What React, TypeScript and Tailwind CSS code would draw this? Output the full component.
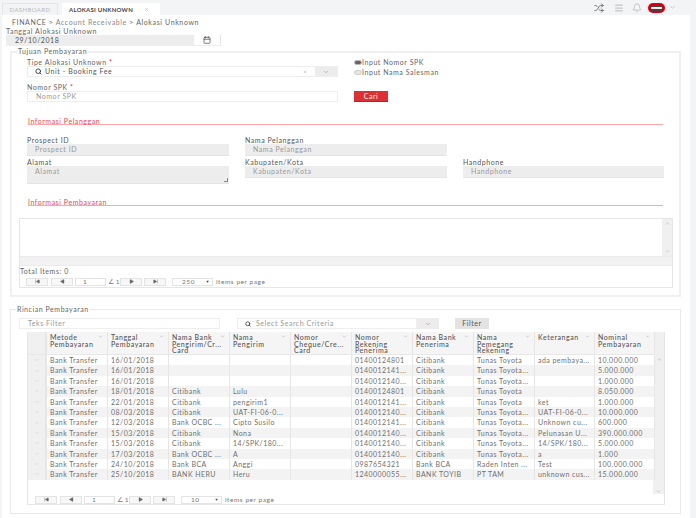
import { Bell, Calendar, ChevronDown, ChevronUp, Menu, Search, Shuffle, X, SkipBack, SkipForward, Play } from "lucide-react";

const cols = ["w-[61px]", "w-[61px]", "w-[61px]", "w-[61px]", "w-[61px]", "w-[61px]", "w-[61px]", "w-[61px]", "w-[60px]", "w-[60px]"];
const heads = ["Metode Pembayaran", "Tanggal Pembayaran", "Nama Bank Pengirim/Cr... Card", "Nama Pengirim", "Nomor Cheque/Cre... Card", "Nomor Rekening Penerima", "Nama Bank Penerima", "Nama Pemegang Rekening", "Keterangan", "Nominal Pembayaran"];
const rows: string[][] = [
  ["Bank Transfer", "16/01/2018", "", "", "", "01400124801", "Citibank", "Tunas Toyota", "ada pembaya...", "10.000.000"],
  ["Bank Transfer", "16/01/2018", "", "", "", "0140012141...", "Citibank", "Tunas Toyota...", "", "5.000.000"],
  ["Bank Transfer", "16/01/2018", "", "", "", "0140012140...", "Citibank", "Tunas Toyota...", "", "1.000.000"],
  ["Bank Transfer", "18/01/2018", "Citibank", "Lulu", "", "01400124801", "Citibank", "Tunas Toyota", "", "8.050.000"],
  ["Bank Transfer", "22/01/2018", "Citibank", "pengirim1", "", "0140012141...", "Citibank", "Tunas Toyota", "ket", "1.000.000"],
  ["Bank Transfer", "08/03/2018", "Citibank", "UAT-FI-06-0...", "", "0140012140...", "Citibank", "Tunas Toyota...", "UAT-FI-06-0...", "10.000.000"],
  ["Bank Transfer", "12/03/2018", "Bank OCBC ...", "Cipto Susilo", "", "0140012141...", "Citibank", "Tunas Toyota...", "Unknown cu...", "600.000"],
  ["Bank Transfer", "15/03/2018", "Citibank", "Nona", "", "0140012140...", "Citibank", "Tunas Toyota...", "Pelunasan U...", "390.000.000"],
  ["Bank Transfer", "15/03/2018", "Citibank", "14/SPK/180...", "", "0140012140...", "Citibank", "Tunas Toyota...", "14/SPK/180...", "5.000.000"],
  ["Bank Transfer", "17/03/2018", "Bank OCBC ...", "A", "", "0140012140...", "Citibank", "Tunas Toyota...", "a", "1.000"],
  ["Bank Transfer", "24/10/2018", "Bank BCA", "Anggi", "", "0987654321", "Bank BCA", "Raden Inten ...", "Test", "100.000.000"],
  ["Bank Transfer", "25/10/2018", "BANK HERU", "Heru", "", "1240000055...", "BANK TOYIB", "PT TAM", "unknown cus...", "15.000.000"],
];

function Pager({ page, size, next }: { page: string; size: string; next?: boolean }) {
  const btn = "h-[8px] w-[22px] shrink-0 border border-[#e4e4e4] bg-[#f7f7f7] flex items-center justify-center text-[#666]";
  return (
    <div className="flex items-center h-[9px] text-[6.5px] text-[#777] whitespace-nowrap">
      <div className={btn}><SkipBack size={5} fill="currentColor" /></div>
      <div className={`${btn} ml-[3px]`}><Play size={5} fill="currentColor" className="rotate-180" /></div>
      <div className="h-[8px] w-[31px] ml-[2px] border border-[#e4e4e4] bg-white pl-[7px] leading-[6px]">{page}</div>
      <span className="ml-[2px] w-[12px] shrink-0 overflow-hidden tracking-normal">∠ 1</span>
      <div className={`${btn} ${next ? "border-[#bbb] bg-[#eee]" : ""}`}><Play size={5} fill="currentColor" /></div>
      <div className={`${btn} ml-[2px]`}><SkipForward size={5} fill="currentColor" /></div>
      <div className="h-[8px] w-[41px] ml-[6px] border border-[#e4e4e4] bg-white pl-[9px] leading-[6px] flex items-center justify-between pr-[2px]">
        <span>{size}</span><span className="text-[4px] text-[#444]">▼</span>
      </div>
      <span className="ml-[3px]">items per page</span>
    </div>
  );
}

function Field({ label, ph, className, tall }: { label: string; ph: string; className: string; tall?: boolean }) {
  return (
    <div className={className}>
      <div className="h-[7px] leading-[7px] text-[#555]">{label}</div>
      <div className={`bg-[#ededed] border-b border-[#e4e4e4] pl-[8px] text-[#999] leading-[10px] ${tall ? "h-[18px] relative" : "h-[12px] leading-[11px]"}`}>
        {ph}
        {tall && <span className="absolute right-[1px] bottom-[1px] w-[4px] h-[4px] border-b border-r border-[#888]" />}
      </div>
    </div>
  );
}

export default function App() {
  return (
    <div className="w-[696px] h-[518px] bg-[#f3f4f6] overflow-hidden flex flex-col text-[7px] text-[#666] tracking-[0.55px] font-['Lato','Liberation_Sans',sans-serif]">
      {/* tabs */}
      <div className="h-[15px] flex items-end pl-[2px] shrink-0">
        <div className="h-[12px] w-[56px] border border-b-0 border-[#e6e6e6] flex items-center justify-center text-[6px] text-[#bbb] tracking-[0.4px]">DASHBOARD</div>
        <div className="h-[12px] w-[98px] ml-[4px] bg-white flex items-center pl-[7px] text-[6px] font-bold text-[#444] tracking-[0.25px]">
          ALOKASI UNKNOWN<X size={5} className="ml-[11px] text-[#aaa]" />
        </div>
        <div className="ml-auto self-stretch flex items-center pr-[20px] text-[#777]">
          <Shuffle size={10} strokeWidth={2.4} />
          <Menu size={10} className="ml-[10px] text-[#c4c4c4]" strokeWidth={3} />
          <Bell size={10} className="ml-[8px] text-[#aaa]" strokeWidth={1.5} />
          <div className="ml-[6px] w-[17px] h-[10px] rounded-full bg-[#d8000f] flex items-center justify-center">
            <div className="w-[11px] h-[6px] bg-[#444] rounded-[1px] flex flex-col justify-center"><div className="h-[2px] bg-[#eee]" /></div>
          </div>
          <ChevronDown size={7} className="ml-[4px] text-[#aaa]" />
        </div>
      </div>
      {/* page */}
      <div className="w-[688px] ml-[2px] h-[503px] bg-white shrink-0 pt-[3px]">
        <div className="pl-[10px] h-[8px] leading-[8px] tracking-[0.62px] text-[#666]">FINANCE &gt; <span className="text-[#888]">Account Receivable</span> &gt; Alokasi Unknown</div>
        <div className="pl-[4px] h-[8px] leading-[9px] mt-[1px]">Tanggal Alokasi Unknown</div>
        <div className="ml-[4px] w-[215px] h-[11px] flex border-b border-[#eee]">
          <div className="w-[188px] bg-[#ededed] pl-[9px] leading-[10px] text-[#555]">29/10/2018</div>
          <div className="flex-1 flex items-center justify-center border-r border-[#e6e6e6]"><Calendar size={8} className="text-[#444]" /></div>
        </div>

        <fieldset className="ml-[8px] w-[671px] h-[250px] mt-[1px] border-2 border-[#f0f0f0] pl-[15px] pr-[6px] relative">
          <legend className="ml-[-10px] px-[1px] h-[9px] leading-[8px] text-[#666]">Tujuan Pembayaran</legend>
          <div className="flex pt-[3px]">
            <div className="w-[311px]">
              <div className="h-[6px] leading-[6px]">Tipe Alokasi Unknown <span className="text-red-500">*</span></div>
              <div className="mt-[1px] h-[11px] border border-[#eee] flex items-center pl-[7px] text-[#555]">
                <Search size={7} strokeWidth={3} className="text-[#333]" />
                <span className="ml-[3px]">Unit - Booking Fee</span>
                <X size={4} className="ml-auto mr-[8px] text-[#888]" />
                <div className="w-[22px] self-stretch bg-[#ececec] flex items-center justify-center"><ChevronDown size={6} className="text-[#888]" /></div>
              </div>
              <div className="h-[7px] mt-[7px] leading-[7px]">Nomor SPK <span className="text-red-500">*</span></div>
              <div className="h-[11px] border border-[#eee] pl-[8px] leading-[9px] text-[#999]">Nomor SPK</div>
            </div>
            <div className="ml-[16px] w-[100px] flex flex-col">
              <label className="flex items-center h-[10px] mt-[-2px] whitespace-nowrap"><span className="w-[8px] h-[5px] shrink-0 rounded-full bg-[#666] border border-[#bbb]" />Input Nomor SPK</label>
              <label className="flex items-center h-[10px] whitespace-nowrap"><span className="w-[8px] h-[5px] shrink-0 rounded-full bg-[#e6e6e6] border border-[#ccc]" />Input Nama Salesman</label>
              <button className="mt-[14px] w-[34px] h-[11px] bg-[#dc3035] border-b border-[#c01f25] text-white leading-[9px] text-[7px]">Cari</button>
            </div>
          </div>

          <div className="mt-[14px] ml-[1px] w-[635px] h-[9px] border-b border-[#ffa5a8] text-[#f0484e] leading-[10px]">Informasi Pelanggan</div>
          <div className="flex mt-[12px] gap-[16px] h-[26px]">
            <Field label="Prospect ID" ph="Prospect ID" className="w-[202px]" />
            <Field label="Nama Pelanggan" ph="Nama Pelanggan" className="w-[202px]" />
          </div>
          <div className="flex gap-[16px] h-[26px] mt-[-4px]">
            <Field label="Alamat" ph="Alamat" tall className="w-[202px]" />
            <Field label="Kabupaten/Kota" ph="Kabupaten/Kota" className="w-[202px]" />
            <Field label="Handphone" ph="Handphone" className="w-[201px]" />
          </div>
          <div className="mt-[12px] ml-[1px] w-[635px] h-[9px] border-b border-[#ffa5a8] text-[#f0484e] leading-[10px]">Informasi Pembayaran</div>
          <div className="ml-[-8px] mt-[12px] w-[654px] h-[70px] border border-[#e6e6e6]">
            <div className="h-[37px] flex justify-end">
              <div className="w-[10px] bg-[#f0f0f0] flex flex-col justify-between items-center text-[#999] py-[2px]"><ChevronUp size={5} /><ChevronDown size={5} /></div>
            </div>
            <div className="h-[10px] border-y border-[#ececec] bg-[#f2f2f2]" />
            <div className="h-[9px] leading-[10px] text-[#666]">Total Items: 0</div>
            <div className="pl-[6px] mt-[2px]"><Pager page="1" size="250" /></div>
          </div>
        </fieldset>

        <fieldset className="ml-[8px] mt-[8px] w-[671px] h-[209px] border border-[#e9e9e9] pl-[8px] relative">
          <legend className="ml-[-3px] px-[1px] h-[8px] leading-[8px] text-[#666]">Rincian Pembayaran</legend>
          <div className="flex h-[11px] mt-[5px]">
            <div className="w-[201px] border border-[#eee] pl-[8px] leading-[9px] text-[#999]">Teks Filter</div>
            <div className="ml-[17px] w-[180px] border border-[#eee] flex items-center pl-[7px] text-[#999]"><Search size={6} strokeWidth={3} className="text-[#333] mr-[5px]" />Select Search Criteria</div>
            <div className="w-[22px] bg-[#ececec] flex items-center justify-center"><ChevronDown size={6} className="text-[#888]" /></div>
            <button className="ml-[16px] w-[34px] bg-[#e3e3e3] text-[#555] leading-[9px]">Filter</button>
          </div>
          <div className="ml-[8px] mt-[3px] w-[638px] h-[173px] border-l border-r border-b border-[#e6e6e6] flex flex-col">
            <div className="flex grow-0">
              <div className="w-[627px]">
                <div className="flex h-[23px] bg-[#f5f5f5] border-b border-[#e8e8e8]">
                  <div className="w-[19px] bg-[#f0f0f0] border-r-2 border-[#e6e6e6] shrink-0" />
                  {heads.map((h, i) => (
                    <div key={h} className={`${cols[i]} shrink-0 border-r border-[#e6e6e6] pl-[3px] pr-[10px] pt-[2px] leading-[6.5px] font-medium text-[#555] relative`}>
                      {h}
                      <ChevronDown size={5} className="absolute right-[4px] top-[2px] text-[#999]" />
                    </div>
                  ))}
                </div>
                {rows.map((r, ri) => (
                  <div key={ri} className={`flex h-[10.4px] leading-[10px] ${ri % 2 ? "bg-[#f3f3f3]" : "bg-white"}`}>
                    <div className="w-[19px] bg-[#f0f0f0] border-r-2 border-[#e6e6e6] shrink-0 flex items-center justify-center text-[#ccc]"><ChevronDown size={6} /></div>
                    {r.map((c, i) => (
                      <div key={i} className={`${cols[i]} shrink-0 border-r border-[#e6e6e6] pl-[3px] whitespace-nowrap overflow-hidden text-[#707070] tracking-[0.45px]`}>{c}</div>
                    ))}
                  </div>
                ))}
              </div>
              <div className="w-[11px] flex flex-col">
                <div className="h-[23px] bg-[#f0f0f0]" />
                <div className="h-[125px] bg-[#f0f0f0] flex flex-col items-center pt-[2px] text-[#888]"><ChevronUp size={5} /></div>
              </div>
            </div>
            <div className="flex justify-end h-[14px]">
              <div className="w-[11px] bg-[#f0f0f0] flex items-end justify-center text-[#888]"><ChevronDown size={5} /></div>
            </div>
            <div className="pl-[7px] mt-[1px]"><Pager page="1" size="10" next /></div>
          </div>
        </fieldset>
      </div>
    </div>
  );
}
